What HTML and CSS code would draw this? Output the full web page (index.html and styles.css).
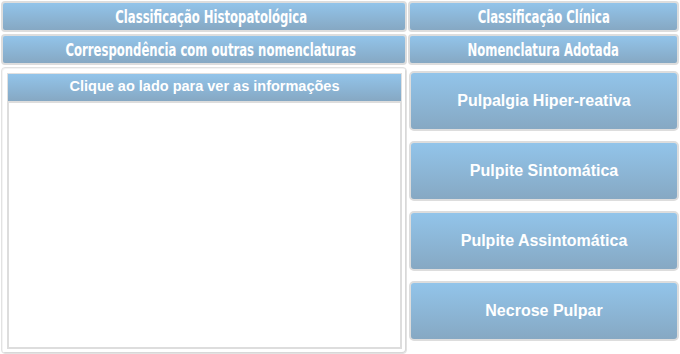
FILE: index.html
```html
<!DOCTYPE html>
<html lang="pt-BR">
<head>
    <meta charset="UTF-8">
    <title>Classificação das Pulpopatias</title>
    <link rel="stylesheet" href="styles.css">
</head>
<body>
    <div class="tabs">
        <div class="tab left"><span>Classificação Histopatológica</span></div>
        <div class="tab"><span>Classificação Clínica</span></div>
        <div class="tab left"><span>Correspondência com outras nomenclaturas</span></div>
        <div class="tab"><span>Nomenclatura Adotada</span></div>
    </div>
    <div class="main">
        <div class="panel">
            <div class="panel-head">Clique ao lado para ver as informações</div>
            <div class="panel-body"></div>
        </div>
        <div class="buttons">
            <button class="item">Pulpalgia Hiper-reativa</button>
            <button class="item">Pulpite Sintomática</button>
            <button class="item">Pulpite Assintomática</button>
            <button class="item">Necrose Pulpar</button>
        </div>
    </div>
</body>
</html>
```

FILE: styles.css
```css
body{
    margin: 0;
    padding: 1px;
    background-color: #fff;
    font-family: "Liberation Sans", Arial, sans-serif;
}
.tabs{
    display: grid;
    grid-template-columns: 406px 271px;
    column-gap: 1px;
    row-gap: 2px;
}
.tab{
    height: 27px;
    display: flex;
    justify-content: center;
    align-items: center;
    border: 2px solid #ddd;
    border-radius: 4px;
    background: linear-gradient(#92c4ea, #86a8c3);
    color: #fff;
    white-space: nowrap;
    font-family: "DejaVu Sans Condensed", sans-serif;
    font-weight: bold;
    font-size: 18px;
}
.tab.left{
    padding-left: 14px;
}
.tab span{
    flex-shrink: 0;
    transform: scaleX(0.72);
}
.main{
    display: flex;
    margin-top: 2px;
}
.panel{
    width: 396px;
    height: 276px;
    padding: 5px 4px 4px 5px;
    border: 1px solid #e2e2e2;
    border-radius: 4px;
    box-shadow: inset -1px -1px 0 #d8d8d8, inset 1px 1px 0 #f4f4f4;
    display: flex;
    flex-direction: column;
}
.panel-head{
    height: 27px;
    line-height: 24px;
    background: linear-gradient(#92c4ea, #86a8c3);
    border: 1px solid #e0e0e0;
    border-bottom: 2px solid #ddd;
    color: #fff;
    text-align: center;
    font-weight: bold;
    font-size: 14.5px;
}
.panel-body{
    flex: 1;
    background-color: #fff;
    border: 2px solid #ddd;
    border-top: none;
}
.buttons{
    margin-left: 2px;
    padding-top: 4px;
    display: flex;
    flex-direction: column;
    gap: 10px;
}
.item{
    width: 270px;
    height: 60px;
    border: 2px solid #ddd;
    border-radius: 5px;
    background: linear-gradient(#92c4ea, #86a8c3);
    color: #fff;
    font-family: "Liberation Sans", Arial, sans-serif;
    font-weight: bold;
    font-size: 16px;
    cursor: pointer;
}
```
